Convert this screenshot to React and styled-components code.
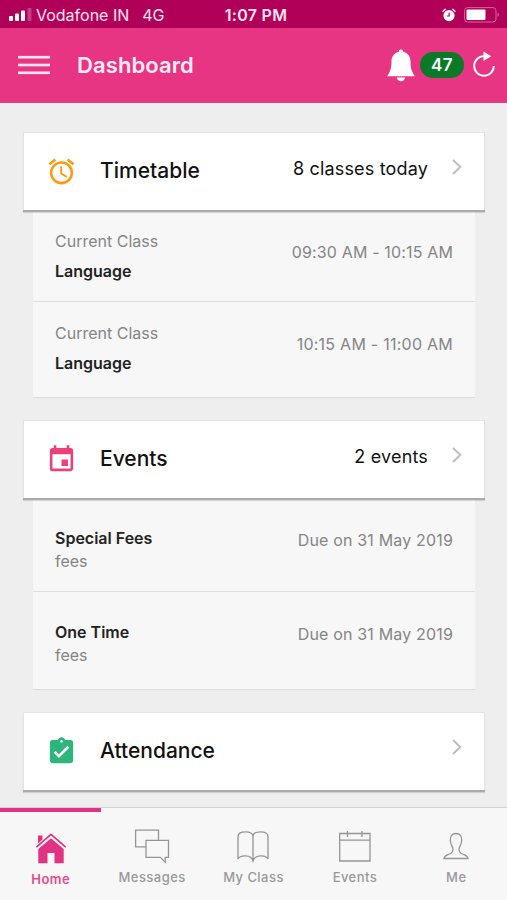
// vendor
import React from 'react';
import styled, { createGlobalStyle } from 'styled-components';
import { MdAlarm, MdAssignmentTurnedIn, MdEvent } from 'react-icons/md';

// +++++++++ DATA +++++++++

const classes = [
	{ id: 1, label: 'Current Class', name: 'Language', time: '09:30 AM - 10:15 AM' },
	{ id: 2, label: 'Current Class', name: 'Language', time: '10:15 AM - 11:00 AM' },
];

const events = [
	{ id: 1, name: 'Special Fees', type: 'fees', due: 'Due on 31 May 2019' },
	{ id: 2, name: 'One Time', type: 'fees', due: 'Due on 31 May 2019' },
];

// +++++++++ CSS +++++++++

const GlobalStyle = createGlobalStyle`
	* {
		box-sizing: border-box;
	}

	body {
		margin: 0;
		background: #eeeeee;
		font-family: Inter, Roboto, sans-serif;
		-webkit-font-smoothing: antialiased;
	}
`;

const Page = styled.div`
	display: flex;
	flex-direction: column;
	width: 100%;
	max-width: 507px;
	height: 900px;
	overflow: hidden;
	background: #eeeeee;
	color: #111;
`;

const StatusBar = styled.div`
	display: grid;
	grid-template-columns: 1fr auto 1fr;
	align-items: center;
	flex: none;
	height: 28px;
	padding: 1px 7px 0 9px;
	background: #b00058;
	color: #ffe3f0;
	font-size: 16px;
	line-height: 20px;
`;

const Carrier = styled.div`
	display: flex;
	align-items: center;
	white-space: nowrap;

	svg {
		margin-right: 4px;
	}
`;

const Network = styled.span`
	margin-left: 13px;
`;

const Clock = styled.div`
	margin-left: 3px;
	font-weight: 600;
	letter-spacing: 0.3px;
`;

const StatusIcons = styled.div`
	display: flex;
	align-items: center;
	justify-content: flex-end;
	gap: 8px;
`;

const Header = styled.header`
	display: flex;
	align-items: center;
	flex: none;
	height: 75px;
	padding: 0 12px 0 18px;
	background: #e73583;
	border-bottom: 1px solid #d9417f;
	color: #fff;
`;

const Title = styled.h1`
	flex: 1;
	margin: 0 0 1px 27px;
	color: #ffeaf3;
	font-size: 22px;
	font-weight: 600;
	line-height: 28px;
	letter-spacing: 0.1px;
`;

const Badge = styled.span`
	width: 44px;
	height: 26px;
	margin: 0 9px 0 5px;
	border-radius: 13px;
	background: #0b7a28;
	font-size: 17px;
	font-weight: 600;
	line-height: 26px;
	letter-spacing: 0.5px;
	text-align: center;
`;

const Content = styled.main`
	flex: 1;
	min-height: 0;
	padding: 29px 22px 0 23px;
`;

const Section = styled.section`
	margin-bottom: 22px;
`;

const Card = styled.div`
	position: relative;
	display: flex;
	align-items: center;
	height: 78px;
	padding: 0 22px 1px;
	border: solid #e3e3e3;
	border-width: 1px 1px 0;
	background: #fff;
	box-shadow: 0 2px 0 #aaa, 0 3px 1px rgba(0, 0, 0, 0.12);
`;

const CardTitle = styled.h2`
	flex: 1;
	margin: 0 0 0 23px;
	font-size: 21px;
	font-weight: 500;
	line-height: 26px;
`;

const CardMeta = styled.span`
	margin: 0 24px 4px 0;
	font-size: 18px;
	line-height: 22px;
	letter-spacing: 0.17px;
`;

const Chevron = styled.svg`
	margin-bottom: 8px;
`;

const Panel = styled.div`
	margin: 0 10px;
	padding-bottom: 4px;
	border-bottom: 1px solid #dcdcdc;
	background: #f7f7f7;
`;

const Row = styled.div`
	display: flex;
	justify-content: space-between;
	height: ${props => props.$height};
	padding: ${props => props.$top} 22px 0;
	font-size: 16px;
	line-height: 20px;

	& + & {
		border-top: 1px solid #dedede;
	}
`;

const Lines = styled.div`
	display: flex;
	flex-direction: column;
	gap: ${props => props.$gap};
`;

const Muted = styled.span`
	color: #858585;
	letter-spacing: ${props => props.$spacing || '0'};
`;

const Strong = styled.span`
	color: #222;
	font-weight: 600;
`;

const Aside = styled(Muted)`
	margin-top: ${props => props.$top};
`;

const TabBar = styled.nav`
	display: grid;
	grid-template-columns: repeat(5, 1fr);
	flex: none;
	height: 93px;
	border-top: 1px solid #d4d4d4;
	background: #f7f7f7;
`;

const Tab = styled.a`
	display: flex;
	flex-direction: column;
	align-items: center;
	gap: ${props => (props.$active ? '5px' : '3px')};
	padding: 16px 0 0;
	border-top: 4px solid ${props => (props.$active ? '#e23383' : 'transparent')};
	color: ${props => (props.$active ? '#e84a8c' : '#999')};
	font-size: 13px;
	font-weight: ${props => (props.$active ? 600 : 500)};
	line-height: 16px;
	letter-spacing: 0.45px;
`;

// +++++++++ ICONS +++++++++

const SignalIcon = () => (
	<svg width="23" height="13" viewBox="0 0 23 13" fill="#fff">
		<rect x="0" y="8" width="4" height="5" rx="1" />
		<rect x="6" y="5.5" width="4" height="7.5" rx="1" />
		<rect x="12" y="2.5" width="4" height="10.5" rx="1" />
		<rect x="18.5" y="0" width="4" height="13" rx="1" opacity="0.25" />
	</svg>
);

const AlarmIcon = () => (
	<svg width="14" height="14" viewBox="0 0 14 14" fill="none">
		<circle cx="7" cy="7.6" r="5.6" fill="#fff" />
		<path d="M1 3.2 3.2 1.2M13 3.2 10.8 1.2" stroke="#fff" strokeWidth="1.4" strokeLinecap="round" />
		<path d="M7.2 4.6V8H4.8" stroke="#b00058" strokeWidth="1.2" />
	</svg>
);

const BatteryIcon = () => (
	<svg width="36" height="16" viewBox="0 0 36 16">
		<rect x="0.6" y="0.6" width="31.4" height="14.4" rx="3" fill="none" stroke="#d4669c" strokeWidth="1" />
		<rect x="2.5" y="2.6" width="19" height="10.5" rx="1" fill="#fff" />
		<path d="M33.5 5.6c2 .8 2 3.6 0 4.4z" fill="#d4669c" />
	</svg>
);

const MenuIcon = () => (
	<svg width="32" height="20" viewBox="0 0 32 20" fill="#ffe6f1">
		<rect width="32" height="2.6" y="0.9" />
		<rect width="32" height="2.6" y="8.7" />
		<rect width="32" height="2.6" y="16.5" />
	</svg>
);

const BellIcon = () => (
	<svg width="28" height="33" viewBox="0 0 28 33" fill="#fff">
		<path d="M14 .5c1.4 0 2.2.9 2.2 2.2C20.6 3.800 23.300 7.200 23.500 12c.2 6.500.6 10 4.300 15.200H.2C3.900 22 4.300 18.500 4.500 12 4.700 7.200 7.400 3.800 11.800 2.700 11.800 1.400 12.600.5 14 .5z" />
		<path d="M9.800 28.500h8.400c-.4 2.300-2 3.700-4.200 3.700s-3.800-1.400-4.200-3.700z" />
	</svg>
);

const RefreshIcon = () => (
	<svg width="22" height="28" viewBox="0 0 22 28">
		<path d="M11 5.100a9.800 9.800 0 1 0 9.800 9.800" fill="none" stroke="#fff" strokeWidth="1.900" />
		<path d="M10.500 .4 18.200 5.200 10.500 10z" fill="#fff" />
	</svg>
);

const ChevronIcon = () => (
	<Chevron width="10" height="18" viewBox="0 0 10 18" fill="none">
		<path d="M1 2 8.300 9 1 16" stroke="#bdbdbd" strokeWidth="2" />
	</Chevron>
);

const TabIcon = ({ children }) => (
	<svg width="36" height="38" viewBox="0 0 36 38" fill="none" stroke="#959595" strokeWidth="1.300">
		{children}
	</svg>
);

const HomeIcon = () => (
	<TabIcon>
		<g fill="#e23383" stroke="none">
			<path d="M5 7.500h4.500v4L5 15.500z" />
			<path d="M18 10.200 30.700 21V35.300H21.500V25H14.500V35.300H5.300V21z" />
			<path d="M18 5.200 33.200 18.400 32.100 19.700 18 7.500 3.900 19.700 2.800 18.400z" />
		</g>
	</TabIcon>
);

const MessagesIcon = () => (
	<TabIcon>
		<path d="M12 18.900H1.600V2.200H24.500V12" />
		<path d="M12 12.400H34.500V29.400H31.200V34.200L26.400 29.400H12z" />
	</TabIcon>
);

const BookIcon = () => (
	<TabIcon>
		<path d="M18 33V8.500C18 5.500 15 3.800 10.500 3.800S3 5.500 3 8.500V31C5 27 16 26 18 33C20 26 31 27 33 31V8.500C33 5.500 30 3.800 25.500 3.800S18 5.500 18 8.500" />
	</TabIcon>
);

const CalendarIcon = () => (
	<TabIcon>
		<path d="M2.700 5.500H33V33H2.700zM2.700 12.200H33M10.500 3V9M25 3V9" />
	</TabIcon>
);

const PersonIcon = () => (
	<TabIcon>
		<path d="M18 5.500c-4 0-6 2.800-5.700 7 .3 4 1.200 5 2.500 7.500.9 3.500-.5 4.800-3.300 6-3.200 1.300-5.200 1.500-5.500 4.500H30c-.3-3-2.300-3.200-5.500-4.500-2.800-1.200-4.200-2.500-3.300-6 1.300-2.500 2.200-3.500 2.500-7.500.3-4.200-1.700-7-5.700-7z" />
	</TabIcon>
);

// +++++++++ COMPONENTS +++++++++

const CardHeader = ({ icon, meta, title }) => (
	<Card>
		{icon}
		<CardTitle>{title}</CardTitle>
		{meta && <CardMeta>{meta}</CardMeta>}
		<ChevronIcon />
	</Card>
);

const tabs = [
	{ label: 'Home', icon: <HomeIcon />, active: true },
	{ label: 'Messages', icon: <MessagesIcon /> },
	{ label: 'My Class', icon: <BookIcon /> },
	{ label: 'Events', icon: <CalendarIcon /> },
	{ label: 'Me', icon: <PersonIcon /> },
];

const App = () => (
	<Page>
		<GlobalStyle />
		<StatusBar>
			<Carrier>
				<SignalIcon />
				Vodafone IN
				<Network>4G</Network>
			</Carrier>
			<Clock>1:07 PM</Clock>
			<StatusIcons>
				<AlarmIcon />
				<BatteryIcon />
			</StatusIcons>
		</StatusBar>
		<Header>
			<MenuIcon />
			<Title>Dashboard</Title>
			<BellIcon />
			<Badge>47</Badge>
			<RefreshIcon />
		</Header>
		<Content>
			<Section>
				<CardHeader
					icon={<MdAlarm size={31} color="#ff9a0c" />}
					meta="8 classes today"
					title="Timetable"
				/>
				<Panel>
					{classes.map((item, index) => (
						<Row key={item.id} $height={index ? '92px' : '91px'} $top="21px">
							<Lines $gap="10px">
								<Muted>{item.label}</Muted>
								<Strong>{item.name}</Strong>
							</Lines>
							<Aside $top="11px" $spacing={index ? '0.25px' : '0.15px'}>{item.time}</Aside>
						</Row>
					))}
				</Panel>
			</Section>
			<Section>
				<CardHeader
					icon={<MdEvent size={31} color="#ec407a" />}
					meta="2 events"
					title="Events"
				/>
				<Panel>
					{events.map((item, index) => (
						<Row key={item.id} $height={index ? '94px' : '93px'} $top="30px">
							<Lines $gap="3px">
								<Strong>{item.name}</Strong>
								<Muted>{item.type}</Muted>
							</Lines>
							<Aside $top="2px" $spacing="0.17px">{item.due}</Aside>
						</Row>
					))}
				</Panel>
			</Section>
			<Section>
				<CardHeader
					icon={<MdAssignmentTurnedIn size={31} color="#2db67c" />}
					title="Attendance"
				/>
			</Section>
		</Content>
		<TabBar>
			{tabs.map(tab => (
				<Tab key={tab.label} $active={tab.active}>
					{tab.icon}
					{tab.label}
				</Tab>
			))}
		</TabBar>
	</Page>
);

export default App;
